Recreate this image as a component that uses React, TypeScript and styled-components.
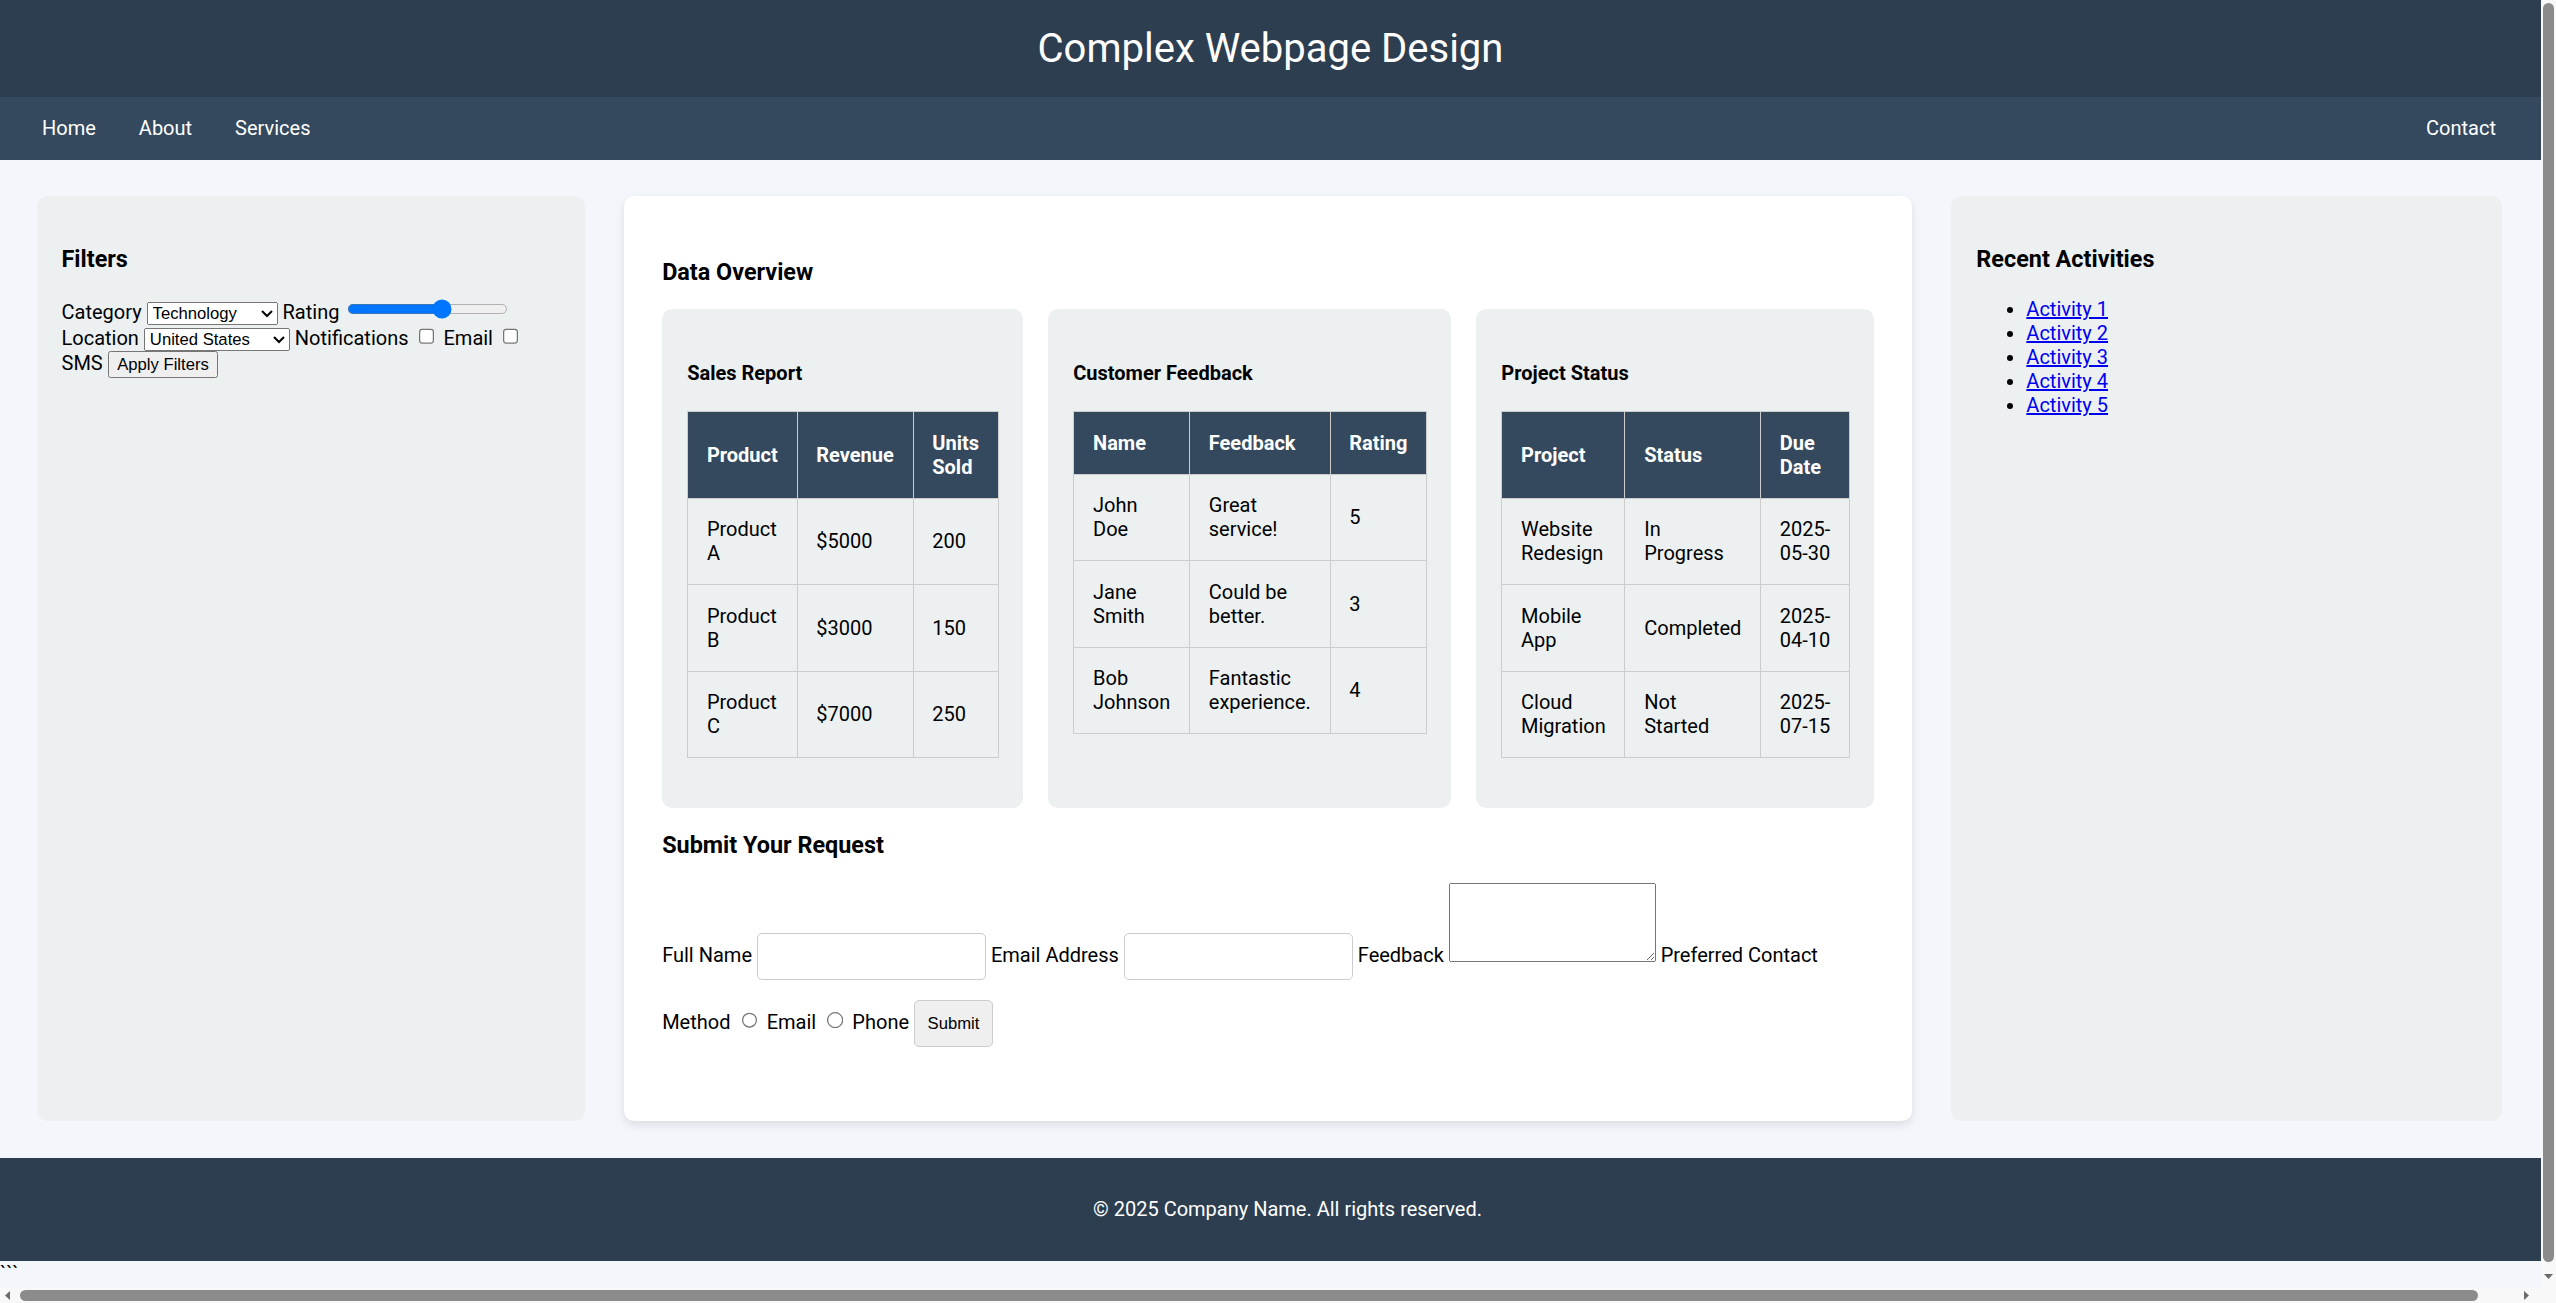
import React from 'react';
import styled, { createGlobalStyle } from 'styled-components';

// 全局样式（右侧留出滚动条宽度）
const GlobalStyle = createGlobalStyle`
  html {
    background: #f3f6fa;
    overflow: hidden;
  }
  body {
    margin: 0 15px 0 0;
    background: #f3f6fa;
    color: #000;
    font-family: Roboto, 'Liberation Sans', Arial, sans-serif;
    font-size: 20px;
  }
`;

// 页头
const Header = styled.header`
  background: #2c3e50;
  color: #fff;
  padding: 25px 0;
  text-align: center;
`;

const Title = styled.h1`
  margin: 0;
  font-size: 40px;
  font-weight: 400;
`;

// 导航
const Nav = styled.nav`
  display: flex;
  justify-content: space-between;
  align-items: center;
  background: #34495e;
  padding: 19.3px 45px 19.3px 42px;
`;

const NavGroup = styled.div`
  display: flex;
  gap: 43px;
`;

const NavLink = styled.a`
  color: #fff;
  text-decoration: none;
`;

// 主体三栏
const Main = styled.main`
  display: grid;
  grid-template-columns: minmax(0, 549fr) minmax(0, 1289fr) minmax(0, 551fr);
  column-gap: 39px;
  padding: 36.7px 39px 36.5px 36.5px;
`;

const SidePanel = styled.aside`
  background: #ecf0f1;
  border-radius: 10px;
  padding: 25px;
`;

const CenterPanel = styled.section`
  background: #fff;
  border-radius: 10px;
  padding: 38px;
  box-shadow: 0 4px 10px rgba(0, 0, 0, 0.1);
`;

const SectionTitle = styled.h3`
  font-size: 23.4px;
  font-weight: 700;
  margin: 23.4px 0;
`;

// 原生控件统一按 125% 缩放
const Control = `
  font-family: 'Liberation Sans', Arial, sans-serif;
  font-size: 13.333px;
  zoom: 1.25;
`;

const FilterForm = styled.form`
  margin: 0;
`;

const Select = styled.select`
  ${Control}
`;

const Range = styled.input`
  ${Control}
`;

const Check = styled.input`
  ${Control}
`;

const PlainButton = styled.button`
  ${Control}
`;

// 数据卡片
const CardGrid = styled.div`
  display: grid;
  grid-template-columns: minmax(0, 362fr) minmax(0, 404fr) minmax(0, 399fr);
  gap: 25px;
`;

const Card = styled.div`
  background: #ecf0f1;
  border-radius: 10px;
  padding: 25px;
`;

const CardTitle = styled.h4`
  font-size: 20px;
  font-weight: 700;
  margin: 26.5px 0;
`;

const Table = styled.table`
  width: 100%;
  border-collapse: collapse;
  margin-bottom: 25px;
`;

const Th = styled.th`
  background: #34495e;
  color: #fff;
  font-weight: 700;
  text-align: left;
  border: 1px solid #ccc;
  padding: 18.75px;
`;

const Td = styled.td`
  text-align: left;
  border: 1px solid #ccc;
  padding: 18.75px;
`;

// 请求表单
const RequestForm = styled.form`
  margin: 0 0 16px;
`;

const TextInput = styled.input`
  ${Control}
  box-sizing: border-box;
  width: 183.2px;
  padding: 10px;
  border: 1px solid #ccc;
  border-radius: 4px;
  margin: 0;
`;

const TextArea = styled.textarea`
  ${Control}
  box-sizing: border-box;
  width: 165.5px;
  height: 63px;
  margin: 0;
`;

const SubmitButton = styled.button`
  ${Control}
  padding: 10px;
  border: 1px solid #ccc;
  border-radius: 4px;
  background: #efefef;
  margin: 16px 0;
`;

// 最近活动
const ActivityList = styled.ul`
  margin: 24.5px 0 0;
  padding-left: 50px;
`;

const ActivityItem = styled.li`
  line-height: 24px;
`;

const ActivityLink = styled.a`
  color: #0000ee;
  text-decoration: underline;
`;

// 页脚（content-box 宽度 + 左右内边距，略超出视口）
const Footer = styled.footer`
  width: 100%;
  background: #2c3e50;
  color: #fff;
  text-align: center;
  padding: 39.5px 17px;
`;

const Stray = styled.div`
  line-height: normal;
`;

// 浏览器滚动条（截图里可见）
const VScroll = styled.div`
  position: fixed;
  top: 0;
  right: 0;
  width: 15px;
  bottom: 15px;
  background: #f8f8f8;
`;

const HScroll = styled.div`
  position: fixed;
  left: 0;
  right: 0;
  bottom: 0;
  height: 15px;
  background: #f8f8f8;
`;

const Thumb = styled.div<{ $vertical?: boolean }>`
  position: absolute;
  background: #8b8b8b;
  border-radius: 6px;
  ${({ $vertical }) =>
    $vertical
      ? 'left: 2px; width: 11px; top: 3px; bottom: 26px;'
      : 'top: 2px; height: 11px; left: 20px; right: 78px;'}
`;

const Arrow = styled.svg<{ $at: 'left' | 'right' | 'down' }>`
  position: absolute;
  width: 15px;
  height: 15px;
  ${({ $at }) =>
    $at === 'left' ? 'left: 0; top: 0;' : $at === 'right' ? 'right: 22px; top: 0;' : 'left: 0; bottom: 4px;'}
`;

interface TableData {
  title: string;
  head: string[];
  rows: string[][];
}

const tables: TableData[] = [
  {
    title: 'Sales Report',
    head: ['Product', 'Revenue', 'Units Sold'],
    rows: [
      ['Product A', '$5000', '200'],
      ['Product B', '$3000', '150'],
      ['Product C', '$7000', '250'],
    ],
  },
  {
    title: 'Customer Feedback',
    head: ['Name', 'Feedback', 'Rating'],
    rows: [
      ['John Doe', 'Great service!', '5'],
      ['Jane Smith', 'Could be better.', '3'],
      ['Bob Johnson', 'Fantastic experience.', '4'],
    ],
  },
  {
    title: 'Project Status',
    head: ['Project', 'Status', 'Due Date'],
    rows: [
      ['Website Redesign', 'In Progress', '2025-05-30'],
      ['Mobile App', 'Completed', '2025-04-10'],
      ['Cloud Migration', 'Not Started', '2025-07-15'],
    ],
  },
];

const activities = ['Activity 1', 'Activity 2', 'Activity 3', 'Activity 4', 'Activity 5'];

const DataCard: React.FC<{ data: TableData }> = ({ data }) => (
  <Card>
    <CardTitle>{data.title}</CardTitle>
    <Table>
      <thead>
        <tr>
          {data.head.map((h) => (
            <Th key={h}>{h}</Th>
          ))}
        </tr>
      </thead>
      <tbody>
        {data.rows.map((row) => (
          <tr key={row[0]}>
            {row.map((cell, i) => (
              <Td key={i}>{cell}</Td>
            ))}
          </tr>
        ))}
      </tbody>
    </Table>
  </Card>
);

const Scrollbars: React.FC = () => (
  <>
    <VScroll>
      <Thumb $vertical />
      <Arrow $at="down" viewBox="0 0 15 15">
        <path d="M3 5h9l-4.5 5z" fill="#6b6b6b" />
      </Arrow>
    </VScroll>
    <HScroll>
      <Arrow $at="left" viewBox="0 0 15 15">
        <path d="M10 3v9L5 7.5z" fill="#6b6b6b" />
      </Arrow>
      <Thumb />
      <Arrow $at="right" viewBox="0 0 15 15">
        <path d="M5 3v9l5-4.5z" fill="#6b6b6b" />
      </Arrow>
    </HScroll>
  </>
);

const App: React.FC = () => (
  <>
    <GlobalStyle />
    <Header>
      <Title>Complex Webpage Design</Title>
    </Header>
    <Nav>
      <NavGroup>
        <NavLink href="#">Home</NavLink>
        <NavLink href="#">About</NavLink>
        <NavLink href="#">Services</NavLink>
      </NavGroup>
      <NavLink href="#">Contact</NavLink>
    </Nav>

    <Main>
      <SidePanel>
        <SectionTitle>Filters</SectionTitle>
        <FilterForm onSubmit={(e) => e.preventDefault()}>
          <label htmlFor="category">Category</label>{' '}
          <Select id="category" defaultValue="technology">
            <option value="technology">Technology</option>
            <option value="health">Health</option>
            <option value="entertainment">Entertainment</option>
          </Select>{' '}
          <label htmlFor="rating">Rating</label>{' '}
          <Range id="rating" type="range" min={0} max={5} defaultValue={3} />{' '}
          <label htmlFor="location">Location</label>{' '}
          <Select id="location" defaultValue="us">
            <option value="us">United States</option>
            <option value="ca">Canada</option>
            <option value="uk">United Kingdom</option>
          </Select>{' '}
          <label>Notifications</label>{' '}
          <Check type="checkbox" id="n-email" /> <label htmlFor="n-email">Email</label>{' '}
          <Check type="checkbox" id="n-sms" /> <label htmlFor="n-sms">SMS</label>{' '}
          <PlainButton type="submit">Apply Filters</PlainButton>
        </FilterForm>
      </SidePanel>

      <CenterPanel>
        <SectionTitle>Data Overview</SectionTitle>
        <CardGrid>
          {tables.map((t) => (
            <DataCard key={t.title} data={t} />
          ))}
        </CardGrid>

        <SectionTitle>Submit Your Request</SectionTitle>
        <RequestForm onSubmit={(e) => e.preventDefault()}>
          <label htmlFor="fullname">Full Name</label>{' '}
          <TextInput id="fullname" type="text" />{' '}
          <label htmlFor="email">Email Address</label>{' '}
          <TextInput id="email" type="email" />{' '}
          <label htmlFor="feedback">Feedback</label>{' '}
          <TextArea id="feedback" />{' '}
          <label>Preferred Contact Method</label>{' '}
          <Check type="radio" name="contact" id="c-email" /> <label htmlFor="c-email">Email</label>{' '}
          <Check type="radio" name="contact" id="c-phone" /> <label htmlFor="c-phone">Phone</label>{' '}
          <SubmitButton type="submit">Submit</SubmitButton>
        </RequestForm>
      </CenterPanel>

      <SidePanel>
        <SectionTitle>Recent Activities</SectionTitle>
        <ActivityList>
          {activities.map((a) => (
            <ActivityItem key={a}>
              <ActivityLink href="#">{a}</ActivityLink>
            </ActivityItem>
          ))}
        </ActivityList>
      </SidePanel>
    </Main>

    <Footer>© 2025 Company Name. All rights reserved.</Footer>
    <Stray>```</Stray>
    <Scrollbars />
  </>
);

export default App;
